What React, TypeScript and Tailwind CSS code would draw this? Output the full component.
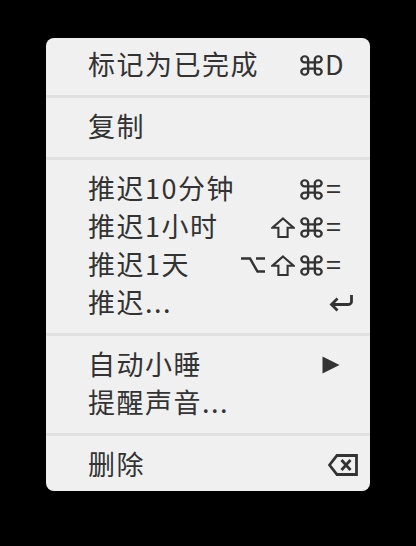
type Mod = "opt" | "shift" | "cmd";

type Item = {
  label: string;
  mods?: Mod[];
  keyChar?: React.ReactNode;
};

function ShiftIcon() {
  return (
    <svg width="24" height="21" viewBox="0 0 24 21" fill="none" stroke="#333" strokeWidth="2.1">
      <path d="M12 1.5L22.5 10.7h-5.9v9.3H7.4v-9.3H1.5z" />
    </svg>
  );
}

function OptionIcon() {
  return (
    <svg width="24" height="16" viewBox="0 0 24 16" fill="none" stroke="#333" strokeWidth="2.5">
      <path d="M0 1.5h9l7.5 13H24" />
      <path d="M15 1.5h9" />
    </svg>
  );
}

function CmdIcon() {
  return (
    <svg width="23" height="21" viewBox="1.8 1.8 20.4 20.4" preserveAspectRatio="none" fill="none" stroke="#333" strokeWidth="2.1">
      <path d="M15 6v12a3 3 0 1 0 3-3H6a3 3 0 1 0 3 3V6a3 3 0 1 0-3 3h12a3 3 0 1 0-3-3" />
    </svg>
  );
}

function ReturnIcon() {
  return (
    <svg width="25" height="18" viewBox="0 0 25 18" fill="none" stroke="#333" strokeWidth="2.8" className="ml-[4px]">
      <path d="M22.5 1v6.5a3 3 0 0 1-3 3H3" />
      <path d="M8.5 4.5L2.5 10.5l6 6" />
    </svg>
  );
}

function DeleteIcon() {
  return (
    <svg width="30" height="22" viewBox="0 0 30 22" fill="none" stroke="#333" strokeWidth="2.8" className="ml-[3px]">
      <path d="M9 1.5h19.5v19H9L1.5 11z" />
      <path d="M13.5 6l9 10M22.5 6l-9 10" />
    </svg>
  );
}

function ArrowIcon() {
  return (
    <svg width="18" height="18" viewBox="0 0 18 18" className="-ml-[3px]">
      <path d="M0.5 0.5L17.5 9L0.5 17.5z" fill="#333" />
    </svg>
  );
}

function Mods({ mods }: { mods: Mod[] }) {
  return (
    <div className="flex items-center justify-end">
      {mods.map((m) => (
        <div
          key={m}
          className={m === "opt" ? "mr-[6px] flex" : m === "shift" ? "mr-[5px] flex" : "mr-[2px] flex"}
        >
          {m === "opt" && <OptionIcon />}
          {m === "shift" && <ShiftIcon />}
          {m === "cmd" && <CmdIcon />}
        </div>
      ))}
    </div>
  );
}

function Row({ item }: { item: Item }) {
  return (
    <div className="flex h-[38px] items-center pl-[42px] pr-[11px]">
      <div className="min-w-0 flex-1 whitespace-nowrap pb-[4px] tracking-[1.5px]">{item.label}</div>
      <div className="flex w-[100px] shrink-0 justify-end">{item.mods && <Mods mods={item.mods} />}</div>
      <div className="flex w-[34px] shrink-0 items-center">{item.keyChar}</div>
    </div>
  );
}

function Separator() {
  return (
    <div className="flex h-[24px] items-center">
      <div className="h-[3px] w-full bg-[#e0e0e0]" />
    </div>
  );
}

const keyText = (s: string) => (
  <span className={s === "=" ? "ml-[1px] pb-[4px] text-[27px]" : "pb-[4px] text-[27px]"}>{s}</span>
);

export default function App() {
  return (
    <div className="h-[546px] w-[416px] bg-black pl-[46px] pt-[38px]">
      <div className="w-[324px] rounded-[8px] bg-[#f0f0f0] pb-[7px] pt-[8px] font-['Noto_Sans_CJK_SC',sans-serif] text-[27px] leading-none text-[#333]">
        <Row item={{ label: "标记为已完成", mods: ["cmd"], keyChar: keyText("D") }} />
        <Separator />
        <Row item={{ label: "复制" }} />
        <Separator />
        <Row item={{ label: "推迟10分钟", mods: ["cmd"], keyChar: keyText("=") }} />
        <Row item={{ label: "推迟1小时", mods: ["shift", "cmd"], keyChar: keyText("=") }} />
        <Row item={{ label: "推迟1天", mods: ["opt", "shift", "cmd"], keyChar: keyText("=") }} />
        <Row item={{ label: "推迟...", keyChar: <ReturnIcon /> }} />
        <Separator />
        <Row item={{ label: "自动小睡", keyChar: <ArrowIcon /> }} />
        <Row item={{ label: "提醒声音..." }} />
        <Separator />
        <Row item={{ label: "删除", keyChar: <DeleteIcon /> }} />
      </div>
    </div>
  );
}
